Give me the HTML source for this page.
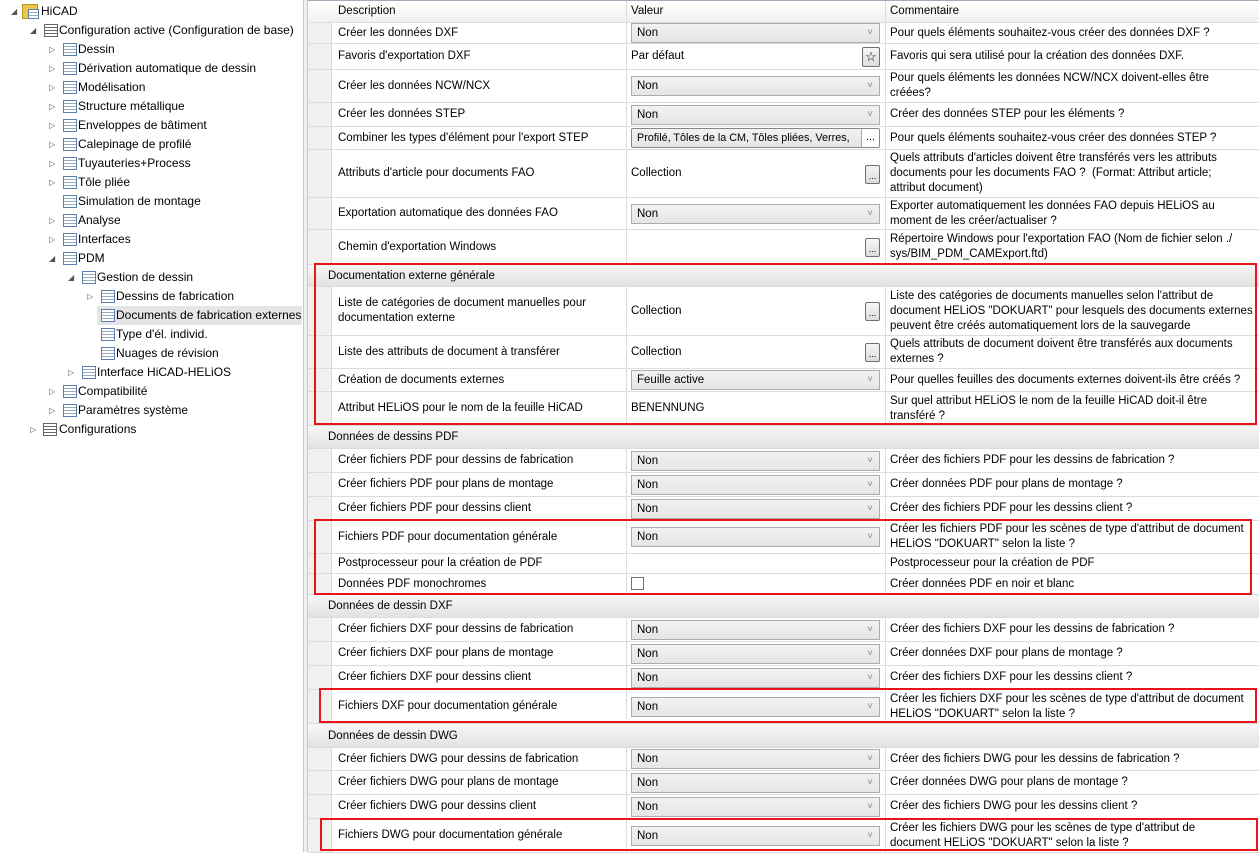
<!DOCTYPE html>
<html><head><meta charset="utf-8">
<style>
*{box-sizing:border-box;margin:0;padding:0}
body{width:1259px;height:852px;overflow:hidden;background:#fff;font-family:"Liberation Sans",sans-serif;font-size:11.5px;color:#000;position:relative}
.tree{position:absolute;left:0;top:0;width:304px;height:852px;background:#fff;border-right:1px solid #c8c8c8}
.sep{position:absolute;left:304px;top:0;width:3px;height:852px;background:#f0f0f0}
.ti{position:absolute;height:19px;line-height:19px;white-space:nowrap;font-size:12px}
.ti .a{position:absolute;top:0;font-size:8px;color:#555}
.ic{position:absolute;top:3px;width:14px;height:13px;border:1px solid #5a7fb0;background:repeating-linear-gradient(#fff 0 2px,#9ab 2px 3px);}
.grid{position:absolute;left:307px;top:0;width:952px;height:852px;border-top:1px solid #a0aab8;border-left:1px solid #c8c8c8}
.r{position:absolute;left:0;width:952px;border-bottom:1px solid #dcdcdc}
.g{position:absolute;left:0;top:0;bottom:0;width:24px;background:#f0f0f0;border-right:1px solid #dcdcdc}
.d,.v,.c{position:absolute;top:0;bottom:0;display:flex;align-items:center;white-space:nowrap;line-height:15px}
.d{left:24px;width:295px;padding-left:6px;border-right:1px solid #dcdcdc}
.v{left:319px;width:259px;padding-left:4px;border-right:1px solid #dcdcdc}
.c{left:578px;width:374px;padding-left:4px}
.dd{position:absolute;left:4px;right:5px;height:20px;top:50%;margin-top:-10px;border:1px solid #acacac;background:linear-gradient(#f2f2f2,#e5e5e5);padding-left:5px;line-height:18px}
.dd:after{content:"˅";position:absolute;right:6px;top:0;color:#888;font-size:10px}
.dd.nx:after{content:none}
.btn{position:absolute;right:5px;top:50%;margin-top:-9px;width:15px;height:19px;border:1px solid #707070;border-radius:2px;background:linear-gradient(#f6f6f6,#dcdcdc);font-size:9px;text-align:center;line-height:20px}
.sec{position:absolute;left:0;width:952px;background:linear-gradient(#f7f7f7,#e2e2e2);padding-left:20px;display:flex;align-items:center;border-bottom:1px solid #dcdcdc}
.hdr{position:absolute;left:0;top:0;width:952px;height:22px;background:linear-gradient(#fff,#f1f1f1);border-bottom:1px solid #dcdcdc}
.hdr span{position:absolute;top:4px}
.red{position:absolute;border:2px solid #e8141c}
.cb{position:absolute;left:4px;top:50%;margin-top:-7px;width:13px;height:13px;border:1px solid #707070;background:#fff}
</style></head><body>
<div class="tree">
<div class="ti" style="top:2px;left:0"><span class="a" style="left:11px">◢</span><span style="position:absolute;left:22px;top:2px;width:16px;height:15px;background:#e8c84a;border:1px solid #b8962a"></span><span class="ic" style="left:28px;top:7px;width:11px;height:10px"></span><span style="position:absolute;left:41px">HiCAD</span></div>
<div class="ti" style="top:21px"><span class="a" style="left:30px">◢</span><span class="ic" style="left:44px;border-color:#666;background:repeating-linear-gradient(#fff 0 2px,#666 2px 3px)"></span><span style="position:absolute;left:59px">Configuration active (Configuration de base)</span></div>
<div class="ti" style="top:40px"><span class="a" style="left:49px">▷</span><span class="ic" style="left:63px"></span><span style="position:absolute;left:78px">Dessin</span></div>
<div class="ti" style="top:59px"><span class="a" style="left:49px">▷</span><span class="ic" style="left:63px"></span><span style="position:absolute;left:78px">Dérivation automatique de dessin</span></div>
<div class="ti" style="top:78px"><span class="a" style="left:49px">▷</span><span class="ic" style="left:63px"></span><span style="position:absolute;left:78px">Modélisation</span></div>
<div class="ti" style="top:97px"><span class="a" style="left:49px">▷</span><span class="ic" style="left:63px"></span><span style="position:absolute;left:78px">Structure métallique</span></div>
<div class="ti" style="top:116px"><span class="a" style="left:49px">▷</span><span class="ic" style="left:63px"></span><span style="position:absolute;left:78px">Enveloppes de bâtiment</span></div>
<div class="ti" style="top:135px"><span class="a" style="left:49px">▷</span><span class="ic" style="left:63px"></span><span style="position:absolute;left:78px">Calepinage de profilé</span></div>
<div class="ti" style="top:154px"><span class="a" style="left:49px">▷</span><span class="ic" style="left:63px"></span><span style="position:absolute;left:78px">Tuyauteries+Process</span></div>
<div class="ti" style="top:173px"><span class="a" style="left:49px">▷</span><span class="ic" style="left:63px"></span><span style="position:absolute;left:78px">Tôle pliée</span></div>
<div class="ti" style="top:192px"><span class="ic" style="left:63px"></span><span style="position:absolute;left:78px">Simulation de montage</span></div>
<div class="ti" style="top:211px"><span class="a" style="left:49px">▷</span><span class="ic" style="left:63px"></span><span style="position:absolute;left:78px">Analyse</span></div>
<div class="ti" style="top:230px"><span class="a" style="left:49px">▷</span><span class="ic" style="left:63px"></span><span style="position:absolute;left:78px">Interfaces</span></div>
<div class="ti" style="top:249px"><span class="a" style="left:49px">◢</span><span class="ic" style="left:63px"></span><span style="position:absolute;left:78px">PDM</span></div>
<div class="ti" style="top:268px"><span class="a" style="left:68px">◢</span><span class="ic" style="left:82px"></span><span style="position:absolute;left:97px">Gestion de dessin</span></div>
<div class="ti" style="top:287px"><span class="a" style="left:87px">▷</span><span class="ic" style="left:101px"></span><span style="position:absolute;left:116px">Dessins de fabrication</span></div>
<div class="ti" style="top:306px;left:97px;width:205px;height:19px;background:#e5e5e5"></div>
<div class="ti" style="top:306px"><span class="ic" style="left:101px"></span><span style="position:absolute;left:116px">Documents de fabrication externes</span></div>
<div class="ti" style="top:325px"><span class="ic" style="left:101px"></span><span style="position:absolute;left:116px">Type d'él. individ.</span></div>
<div class="ti" style="top:344px"><span class="ic" style="left:101px"></span><span style="position:absolute;left:116px">Nuages de révision</span></div>
<div class="ti" style="top:363px"><span class="a" style="left:68px">▷</span><span class="ic" style="left:82px"></span><span style="position:absolute;left:97px">Interface HiCAD-HELiOS</span></div>
<div class="ti" style="top:382px"><span class="a" style="left:49px">▷</span><span class="ic" style="left:63px"></span><span style="position:absolute;left:78px">Compatibilité</span></div>
<div class="ti" style="top:401px"><span class="a" style="left:49px">▷</span><span class="ic" style="left:63px"></span><span style="position:absolute;left:78px">Paramètres système</span></div>
<div class="ti" style="top:420px"><span class="a" style="left:30px">▷</span><span class="ic" style="left:43px;border-color:#666;background:repeating-linear-gradient(#fff 0 2px,#666 2px 3px)"></span><span style="position:absolute;left:59px">Configurations</span></div>
</div>
<div class="sep"></div>
<div class="grid">
<div class="hdr"><span style="left:30px">Description</span><span style="left:323px">Valeur</span><span style="left:582px">Commentaire</span><span style="position:absolute;left:318px;top:0;height:22px;border-left:1px solid #dcdcdc"></span><span style="position:absolute;left:577px;top:0;height:22px;border-left:1px solid #dcdcdc"></span></div>

<div class="r" style="top:22px;height:21px"><div class="g"></div><div class="d">Créer les données DXF</div><div class="v"><div class="dd">Non</div></div><div class="c">Pour quels éléments souhaitez-vous créer des données DXF ?</div></div>
<div class="r" style="top:43px;height:26px"><div class="g"></div><div class="d">Favoris d'exportation DXF</div><div class="v">Par défaut<div class="btn" style="width:18px;height:20px;margin-top:-10px;font-size:13px;line-height:18px">☆</div></div><div class="c">Favoris qui sera utilisé pour la création des données DXF.</div></div>
<div class="r" style="top:69px;height:33px"><div class="g"></div><div class="d">Créer les données NCW/NCX</div><div class="v"><div class="dd">Non</div></div><div class="c">Pour quels éléments les données NCW/NCX doivent-elles être<br>créées?</div></div>
<div class="r" style="top:102px;height:24px"><div class="g"></div><div class="d">Créer les données STEP</div><div class="v"><div class="dd">Non</div></div><div class="c">Créer des données STEP pour les éléments ?</div></div>
<div class="r" style="top:126px;height:23px"><div class="g"></div><div class="d">Combiner les types d'élément pour l'export STEP</div><div class="v"><div class="dd nx" style="overflow:hidden;font-size:10.8px;border-color:#888;border-radius:2px"><span style="display:block;width:222px;overflow:hidden">Profilé, Tôles de la CM, Tôles pliées, Verres,</span><span style="position:absolute;right:0;top:0;width:18px;height:18px;border-left:1px solid #acacac;text-align:center;background:#fff;line-height:16px">...</span></div></div><div class="c">Pour quels éléments souhaitez-vous créer des données STEP ?</div></div>
<div class="r" style="top:149px;height:48px"><div class="g"></div><div class="d">Attributs d'article pour documents FAO</div><div class="v">Collection<div class="btn">...</div></div><div class="c">Quels attributs d'articles doivent être transférés vers les attributs<br>documents pour les documents FAO ?&nbsp; (Format: Attribut article;<br>attribut document)</div></div>
<div class="r" style="top:197px;height:32px"><div class="g"></div><div class="d">Exportation automatique des données FAO</div><div class="v"><div class="dd">Non</div></div><div class="c">Exporter automatiquement les données FAO depuis HELiOS au<br>moment de les créer/actualiser ?</div></div>
<div class="r" style="top:229px;height:35px"><div class="g"></div><div class="d">Chemin d'exportation Windows</div><div class="v"><div class="btn">...</div></div><div class="c">Répertoire Windows pour l'exportation FAO (Nom de fichier selon ./<br>sys/BIM_PDM_CAMExport.ftd)</div></div>

<div class="sec" style="top:264px;height:22px">Documentation externe générale</div>
<div class="r" style="top:286px;height:49px"><div class="g"></div><div class="d">Liste de catégories de document manuelles pour<br>documentation externe</div><div class="v">Collection<div class="btn">...</div></div><div class="c">Liste des catégories de documents manuelles selon l'attribut de<br>document HELiOS "DOKUART" pour lesquels des documents externes<br>peuvent être créés automatiquement lors de la sauvegarde</div></div>
<div class="r" style="top:335px;height:33px"><div class="g"></div><div class="d">Liste des attributs de document à transférer</div><div class="v">Collection<div class="btn">...</div></div><div class="c">Quels attributs de document doivent être transférés aux documents<br>externes ?</div></div>
<div class="r" style="top:368px;height:23px"><div class="g"></div><div class="d">Création de documents externes</div><div class="v"><div class="dd">Feuille active</div></div><div class="c">Pour quelles feuilles des documents externes doivent-ils être créés ?</div></div>
<div class="r" style="top:391px;height:34px"><div class="g"></div><div class="d">Attribut HELiOS pour le nom de la feuille HiCAD</div><div class="v">BENENNUNG</div><div class="c">Sur quel attribut HELiOS le nom de la feuille HiCAD doit-il être<br>transféré ?</div></div>

<div class="sec" style="top:425px;height:23px">Données de dessins PDF</div>
<div class="r" style="top:448px;height:24px"><div class="g"></div><div class="d">Créer fichiers PDF pour dessins de fabrication</div><div class="v"><div class="dd">Non</div></div><div class="c">Créer des fichiers PDF pour les dessins de fabrication ?</div></div>
<div class="r" style="top:472px;height:24px"><div class="g"></div><div class="d">Créer fichiers PDF pour plans de montage</div><div class="v"><div class="dd">Non</div></div><div class="c">Créer données PDF pour plans de montage ?</div></div>
<div class="r" style="top:496px;height:24px"><div class="g"></div><div class="d">Créer fichiers PDF pour dessins client</div><div class="v"><div class="dd">Non</div></div><div class="c">Créer des fichiers PDF pour les dessins client ?</div></div>
<div class="r" style="top:520px;height:33px"><div class="g"></div><div class="d">Fichiers PDF pour documentation générale</div><div class="v"><div class="dd">Non</div></div><div class="c">Créer les fichiers PDF pour les scènes de type d'attribut de document<br>HELiOS "DOKUART" selon la liste ?</div></div>
<div class="r" style="top:553px;height:20px"><div class="g"></div><div class="d">Postprocesseur pour la création de PDF</div><div class="v"></div><div class="c">Postprocesseur pour la création de PDF</div></div>
<div class="r" style="top:573px;height:21px"><div class="g"></div><div class="d">Données PDF monochromes</div><div class="v"><div class="cb"></div></div><div class="c">Créer données PDF en noir et blanc</div></div>

<div class="sec" style="top:594px;height:23px">Données de dessin DXF</div>
<div class="r" style="top:617px;height:24px"><div class="g"></div><div class="d">Créer fichiers DXF pour dessins de fabrication</div><div class="v"><div class="dd">Non</div></div><div class="c">Créer des fichiers DXF pour les dessins de fabrication ?</div></div>
<div class="r" style="top:641px;height:24px"><div class="g"></div><div class="d">Créer fichiers DXF pour plans de montage</div><div class="v"><div class="dd">Non</div></div><div class="c">Créer données DXF pour plans de montage ?</div></div>
<div class="r" style="top:665px;height:24px"><div class="g"></div><div class="d">Créer fichiers DXF pour dessins client</div><div class="v"><div class="dd">Non</div></div><div class="c">Créer des fichiers DXF pour les dessins client ?</div></div>
<div class="r" style="top:689px;height:34px"><div class="g"></div><div class="d">Fichiers DXF pour documentation générale</div><div class="v"><div class="dd">Non</div></div><div class="c">Créer les fichiers DXF pour les scènes de type d'attribut de document<br>HELiOS "DOKUART" selon la liste ?</div></div>

<div class="sec" style="top:723px;height:24px">Données de dessin DWG</div>
<div class="r" style="top:747px;height:23px"><div class="g"></div><div class="d">Créer fichiers DWG pour dessins de fabrication</div><div class="v"><div class="dd">Non</div></div><div class="c">Créer des fichiers DWG pour les dessins de fabrication ?</div></div>
<div class="r" style="top:770px;height:24px"><div class="g"></div><div class="d">Créer fichiers DWG pour plans de montage</div><div class="v"><div class="dd">Non</div></div><div class="c">Créer données DWG pour plans de montage ?</div></div>
<div class="r" style="top:794px;height:24px"><div class="g"></div><div class="d">Créer fichiers DWG pour dessins client</div><div class="v"><div class="dd">Non</div></div><div class="c">Créer des fichiers DWG pour les dessins client ?</div></div>
<div class="r" style="top:818px;height:34px"><div class="g"></div><div class="d">Fichiers DWG pour documentation générale</div><div class="v"><div class="dd">Non</div></div><div class="c">Créer les fichiers DWG pour les scènes de type d'attribut de<br>document HELiOS "DOKUART" selon la liste ?</div></div>
</div>
<div class="red" style="left:314px;top:263px;width:943px;height:162px"></div>
<div class="red" style="left:314px;top:519px;width:938px;height:76px"></div>
<div class="red" style="left:319px;top:688px;width:938px;height:35px"></div>
<div class="red" style="left:320px;top:818px;width:938px;height:33px"></div>
</body></html>
